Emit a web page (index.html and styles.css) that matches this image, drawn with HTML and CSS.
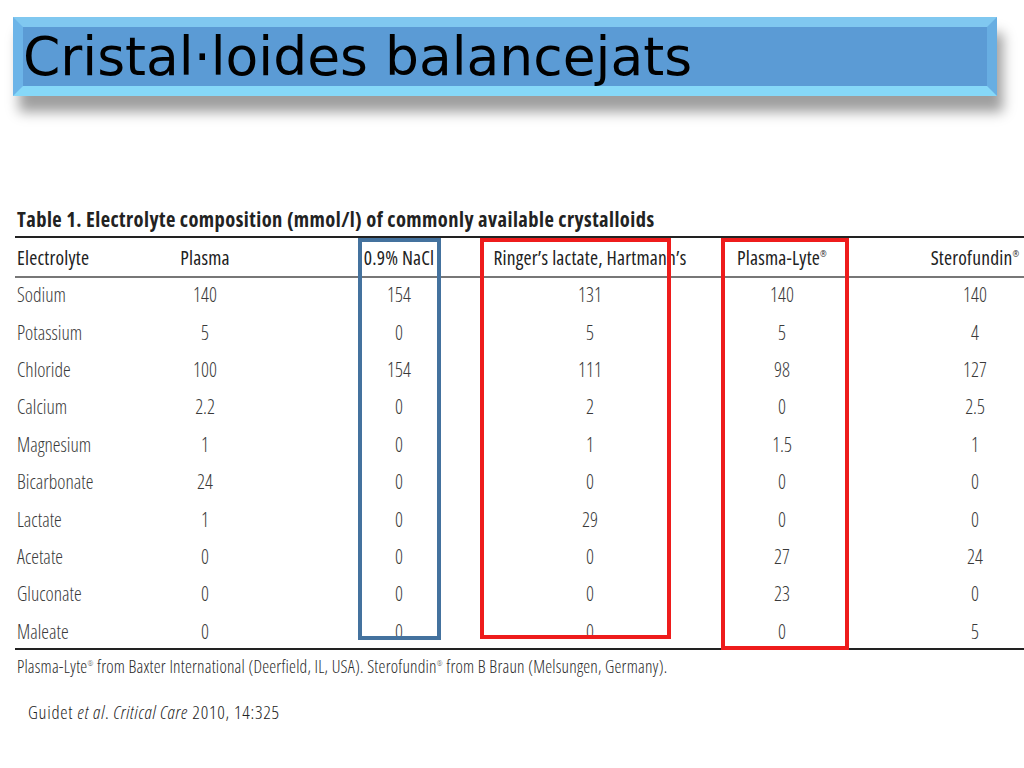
FILE: index.html
```html
<!DOCTYPE html>
<html lang="ca">
<head>
<meta charset="utf-8">
<title>Cristal·loides balancejats</title>
<link rel="stylesheet" href="styles.css">
</head>
<body>
<header class="banner"><h1 class="banner-title">Cristal·loides balancejats</h1></header>
<main class="content">
  <h2 class="table-caption">Table 1. Electrolyte composition (mmol/l) of commonly available crystalloids</h2>
  <div class="grid">
    <div class="row head">
      <span class="c1">Electrolyte</span><span class="c2">Plasma</span><span class="c3">0.9% NaCl</span><span class="c4">Ringer’s lactate, Hartmann’s</span><span class="c5">Plasma-Lyte<sup>®</sup></span><span class="c6">Sterofundin<sup>®</sup></span>
    </div>
    <div class="row"><span class="c1">Sodium</span><span class="c2">140</span><span class="c3">154</span><span class="c4">131</span><span class="c5">140</span><span class="c6">140</span></div>
    <div class="row"><span class="c1">Potassium</span><span class="c2">5</span><span class="c3">0</span><span class="c4">5</span><span class="c5">5</span><span class="c6">4</span></div>
    <div class="row"><span class="c1">Chloride</span><span class="c2">100</span><span class="c3">154</span><span class="c4">111</span><span class="c5">98</span><span class="c6">127</span></div>
    <div class="row"><span class="c1">Calcium</span><span class="c2">2.2</span><span class="c3">0</span><span class="c4">2</span><span class="c5">0</span><span class="c6">2.5</span></div>
    <div class="row"><span class="c1">Magnesium</span><span class="c2">1</span><span class="c3">0</span><span class="c4">1</span><span class="c5">1.5</span><span class="c6">1</span></div>
    <div class="row"><span class="c1">Bicarbonate</span><span class="c2">24</span><span class="c3">0</span><span class="c4">0</span><span class="c5">0</span><span class="c6">0</span></div>
    <div class="row"><span class="c1">Lactate</span><span class="c2">1</span><span class="c3">0</span><span class="c4">29</span><span class="c5">0</span><span class="c6">0</span></div>
    <div class="row"><span class="c1">Acetate</span><span class="c2">0</span><span class="c3">0</span><span class="c4">0</span><span class="c5">27</span><span class="c6">24</span></div>
    <div class="row"><span class="c1">Gluconate</span><span class="c2">0</span><span class="c3">0</span><span class="c4">0</span><span class="c5">23</span><span class="c6">0</span></div>
    <div class="row last"><span class="c1">Maleate</span><span class="c2">0</span><span class="c3">0</span><span class="c4">0</span><span class="c5">0</span><span class="c6">5</span></div>
    <div class="mark mark-blue"></div>
    <div class="mark mark-red1"></div>
    <div class="mark mark-red2"></div>
  </div>
  <p class="footnote">Plasma-Lyte<sup>®</sup> from Baxter International (Deerfield, IL, USA). Sterofundin<sup>®</sup> from B Braun (Melsungen, Germany).</p>
  <p class="cite">Guidet <i>et al</i>. <i>Critical Care</i> 2010, 14:325</p>
</main>
</body>
</html>
```

FILE: styles.css
```css
html, body {
  margin: 0;
  padding: 0;
  background: #ffffff;
  overflow: hidden;
}
body {
  width: 1024px;
  height: 768px;
}
.banner {
  box-sizing: border-box;
  margin: 17px 27px 0 13px;
  height: 79px;
  background: #5b9bd5;
  border-style: solid;
  border-width: 10px;
  border-top-color: #80c8f0;
  border-left-color: #6cb4e8;
  border-bottom-color: #86d8f8;
  border-right-color: #68aee2;
  box-shadow: 6px 16px 12px rgba(0, 0, 0, 0.38);
  display: flex;
  align-items: center;
}
.banner-title {
  margin: 0;
  font-family: "DejaVu Sans", sans-serif;
  font-weight: normal;
  font-size: 53.5px;
  line-height: 60px;
  color: #000;
  white-space: nowrap;
}
.content {
  margin: 111px 0 0 15px;
  font-family: "Open Sans", "DejaVu Sans Condensed", sans-serif;
  font-stretch: 75%;
  color: #333;
}
.table-caption {
  margin: 0 0 5px 2px;
  font-size: 20.5px;
  line-height: 24px;
  font-weight: 700;
  letter-spacing: 0.44px;
  color: #222;
  white-space: nowrap;
}
.grid {
  position: relative;
  width: 1009px;
  border-top: 2px solid #222;
  border-bottom: 2px solid #222;
}
.row {
  display: grid;
  grid-template-columns: 115px 150px 238px 144px 240px 122px;
  box-sizing: border-box;
  height: 37.4px;
  padding-bottom: 4px;
  align-items: center;
  font-size: 19.5px;
  font-weight: 300;
  color: #3a3a3a;
}
.row.last {
  height: 33.8px;
  padding-bottom: 0;
}
.row.head {
  height: 40px;
  padding-bottom: 0;
  border-bottom: 2px solid #777;
  color: #222;
  font-weight: 500;
  letter-spacing: 0.2px;
}
.row span {
  text-align: center;
  white-space: nowrap;
}
.row .c1 {
  text-align: left;
  padding-left: 2px;
}
.row .c6 {
  padding-left: 24px;
}
.row.head .c4 {
  margin: 0 -40px;
}
sup {
  font-size: 8px;
  vertical-align: 8px;
  line-height: 0;
}
.mark {
  position: absolute;
  box-sizing: border-box;
  top: 0;
  border: 4px solid;
}
.mark-blue {
  left: 343px;
  width: 83px;
  height: 402px;
  border-color: #44729e;
}
.mark-red1 {
  left: 465px;
  width: 191px;
  height: 401px;
  border-color: #ee1c1c;
}
.mark-red2 {
  left: 706px;
  width: 128px;
  height: 412px;
  border-color: #ee1c1c;
}
.footnote {
  margin: 6px 0 0 2px;
  font-size: 17.5px;
  line-height: 20px;
  font-weight: 300;
  letter-spacing: 0.2px;
  color: #2a2a2a;
  white-space: nowrap;
}
.footnote sup {
  font-size: 7px;
  vertical-align: 7px;
}
.cite {
  margin: 25px 0 0 13px;
  font-size: 18.5px;
  line-height: 22px;
  font-weight: 300;
  letter-spacing: 0.75px;
  color: #222;
}
```
